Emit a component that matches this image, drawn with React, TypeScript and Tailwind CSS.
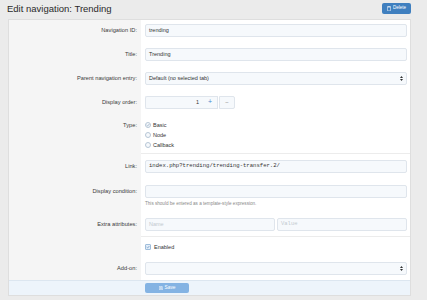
import type { ReactNode } from "react";

const field =
  "flex h-[13px] w-full items-center rounded-[2px] border border-[#dfe5ec] bg-[#f6f9fc] px-[3px] text-[5.5px] text-[#333]";

function Row({
  label,
  children,
  pad,
  sep,
}: {
  label?: string;
  children: ReactNode;
  pad: string;
  sep?: boolean;
}) {
  return (
    <div className="flex">
      <div className={`w-[132px] shrink-0 bg-[#f5f5f5] pr-[4px] text-right ${pad} ${sep ? "pt-[5px]" : ""}`}>
        {label && (
          <div className={`h-[13px] leading-[13px] text-[5.7px] text-[#3a3a3a] ${sep ? "mt-[1px]" : ""}`}>
            {label}
          </div>
        )}
      </div>
      <div className={`min-w-0 flex-1 pl-[4px] pr-[3px] ${pad} ${sep ? "border-t border-[#ececec]" : ""}`}>
        {children}
      </div>
    </div>
  );
}

function Arrows() {
  return (
    <svg width="3" height="5" viewBox="0 0 3 5" className="ml-auto">
      <path d="M1.5 0 L3 2 H0 Z M1.5 5 L3 3 H0 Z" fill="#333" />
    </svg>
  );
}

function Radio({ label, checked }: { label: string; checked?: boolean }) {
  return (
    <div className="flex h-[10px] items-center gap-[2px] text-[5.5px] text-[#333]">
      <span className="flex h-[6px] w-[6px] items-center justify-center rounded-full border border-[#b7c6d6] bg-[#f6f9fc]">
        {checked && (
          <svg width="4" height="4" viewBox="0 0 4 4">
            <path d="M0.6 2.1 L1.6 3 L3.4 1" stroke="#8aa4be" strokeWidth="0.7" fill="none" />
          </svg>
        )}
      </span>
      <span>{label}</span>
    </div>
  );
}

export default function App() {
  return (
    <div className="h-[300px] w-[427px] overflow-hidden bg-[#ebebeb] font-['Liberation_Sans',Arial,sans-serif]">
      <div className="flex h-[19px] items-start justify-between pl-[7px] pr-[16px]">
        <h1 className="mt-[3px] text-[9.5px] leading-[11px] text-[#2a2a2a]">Edit navigation: Trending</h1>
        <button
          type="button"
          className="mt-[3px] flex h-[11px] w-[29px] items-center justify-center gap-[2px] rounded-[2px] bg-[#3f7fbf] text-[4.5px] text-white"
        >
          <svg width="4" height="5" viewBox="0 0 4 5">
            <path d="M0 0.7 H4 M1.3 0.7 V0.2 H2.7 V0.7 M0.5 1.1 H3.5 V4.8 H0.5 Z" stroke="white" strokeWidth="0.5" fill="none" />
          </svg>
          Delete
        </button>
      </div>

      <div className="ml-[8px] w-[403px] border border-[#dedede] bg-white">
        <Row label="Navigation ID:" pad="pt-[4px] pb-[7px]">
          <div className={field}>trending</div>
        </Row>
        <Row label="Title:" pad="pt-[4px] pb-[7px]">
          <div className={field}>Trending</div>
        </Row>
        <Row label="Parent navigation entry:" pad="pt-[4px] pb-[7px]">
          <div className={field}>
            Default (no selected tab)
            <Arrows />
          </div>
        </Row>
        <Row label="Display order:" pad="pt-[4px] pb-[7px]">
          <div className="flex h-[13px] text-[5.5px]">
            <div className="flex w-[58px] items-center justify-end rounded-l-[2px] border border-r-0 border-[#dfe5ec] bg-[#f6f9fc] pr-[4px] text-[#333]">
              1
            </div>
            <div className="flex w-[15px] items-center justify-center border border-l-0 border-[#dfe5ec] bg-[#f6f9fc] text-[7px] text-[#4a8bd0]">
              +
            </div>
            <div className="ml-[1px] flex w-[16px] items-center justify-center rounded-r-[2px] border border-[#dfe5ec] bg-[#f6f9fc] text-[6px] text-[#888]">
              −
            </div>
          </div>
        </Row>
        <div className="flex">
          <div className="w-[132px] shrink-0 bg-[#f5f5f5] pr-[4px] pt-[4px] pb-[3px] text-right">
            <div className="h-[10px] leading-[10px] text-[5.7px] text-[#3a3a3a]">Type:</div>
          </div>
          <div className="flex-1 pl-[4px] pr-[3px] pt-[4px] pb-[3px]">
            <Radio label="Basic" checked />
            <Radio label="Node" />
            <Radio label="Callback" />
          </div>
        </div>
        <Row label="Link:" pad="pt-[6px] pb-[7px]" sep>
          <div className={`${field} font-['Liberation_Mono',monospace] text-[5.6px]`}>
            index.php?trending/trending-transfer.2/
          </div>
        </Row>
        <Row label="Display condition:" pad="pt-[5px] pb-[5px]">
          <div className={field} />
          <div className="mt-[2px] h-[8px] leading-[8px] text-[4.6px] text-[#8a8a8a]">
            This should be entered as a template-style expression.
          </div>
        </Row>
        <Row label="Extra attributes:" pad="pt-[5px] pb-[5px]">
          <div className="flex gap-[2px]">
            <div className={`${field} text-[#c3c9cf]`}>Name</div>
            <div className={`${field} font-['Liberation_Mono',monospace] text-[#c3c9cf]`}>Value</div>
          </div>
        </Row>
        <div className="flex">
          <div className="w-[132px] shrink-0 bg-[#f5f5f5]" />
          <div className="flex-1 border-t border-[#ececec] pl-[4px] pr-[3px] pt-[5px] pb-[5px]">
            <div className="flex h-[10px] items-center gap-[3px] text-[5.5px] text-[#333]">
              <span className="flex h-[6px] w-[6px] items-center justify-center rounded-[1px] border border-[#9fbddb] bg-[#e4eef8]">
                <svg width="4" height="4" viewBox="0 0 4 4">
                  <path d="M0.6 2.1 L1.6 3 L3.4 1" stroke="#5f8fc0" strokeWidth="0.7" fill="none" />
                </svg>
              </span>
              Enabled
            </div>
          </div>
        </div>
        <Row label="Add-on:" pad="pt-[5px] pb-[5px]">
          <div className={field}>
            <Arrows />
          </div>
        </Row>
        <div className="border-t border-[#dce6f0] bg-[#edf4fb] pl-[136px] pt-[2px] pb-[2px]">
          <button
            type="button"
            className="flex h-[10px] w-[44px] items-center justify-center gap-[2px] rounded-[2px] bg-[#84b3e3] text-[4.8px] text-white"
          >
            <svg width="4" height="4" viewBox="0 0 4 4">
              <path d="M0.3 0.3 H3 L3.7 1 V3.7 H0.3 Z M1 0.3 V1.5 H2.8 V0.3 M1 3.7 V2.5 H3 V3.7" stroke="white" strokeWidth="0.45" fill="none" />
            </svg>
            Save
          </button>
        </div>
      </div>
    </div>
  );
}
